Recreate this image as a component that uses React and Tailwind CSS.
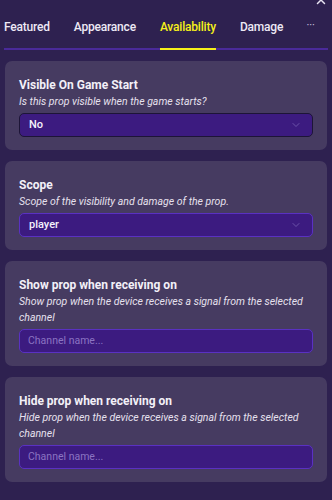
import { ChevronDown, X } from "lucide-react";

const tabs = ["Featured", "Appearance", "Availability", "Damage"];

function Section({ title, hint, children }) {
  return (
    <div className="rounded-[7px] bg-[#463b61] px-[14px] pt-[15px] pb-[13px]">
      <p className="text-[12px] font-bold leading-[18px] text-[#f3f0f8]">{title}</p>
      <p className="text-[10.5px] italic leading-[16px] text-[#e6e1ee]">{hint}</p>
      <div className="mt-[3px]">{children}</div>
    </div>
  );
}

function Select({ value, dark }) {
  return (
    <div
      className={`flex h-[24px] items-center justify-between rounded-[5px] border bg-[#3c1b80] pl-[9px] pr-[10px] ${
        dark ? "border-[#1d1537]" : "border-[#5a31c2]"
      }`}
    >
      <span className="text-[11px] font-medium text-[#f5f2fb]">{value}</span>
      <ChevronDown size={12} strokeWidth={1.5} className="text-[#7b64b6]" />
    </div>
  );
}

function ChannelInput() {
  return (
    <div className="flex h-[24px] items-center rounded-[5px] border border-[#5a31c2] bg-[#3c1b80] pl-[8px]">
      <span className="text-[10.5px] text-[#8b74c2]">Channel name...</span>
    </div>
  );
}

export default function App() {
  return (
    <div
      className="relative h-[500px] w-[332px] overflow-hidden bg-[#2e2150]"
      style={{ fontFamily: "Roboto, 'Noto Sans', sans-serif" }}
    >
      <X size={14} strokeWidth={2.5} className="absolute right-[4px] top-[-7px] text-[#e9e4f2]" />

      <div className="px-[4px] pt-[18px]">
        <div className="flex items-end border-b-2 border-[#4a2a9a]">
          {tabs.map((t, i) => (
            <div
              key={t}
              className={`relative pb-[12px] text-[12px] font-medium leading-[18px] tracking-[-0.2px] ${
                i === 0 ? "" : "ml-[24px]"
              } ${t === "Availability" ? "text-[#f6f01a]" : "text-[#ede9f5]"}`}
            >
              {t}
              {t === "Availability" && (
                <span className="absolute bottom-[-2px] left-0 right-0 h-[2px] bg-[#f6f01a]" />
              )}
            </div>
          ))}
          <div className="ml-auto mr-[13px] pb-[14px] text-[11px] leading-[16px] text-[#d8d2e6]">···</div>
        </div>
      </div>

      <div className="flex flex-col gap-[11px] px-[5px] pt-[11px]">
        <Section title="Visible On Game Start" hint="Is this prop visible when the game starts?">
          <Select value="No" dark />
        </Section>
        <Section title="Scope" hint="Scope of the visibility and damage of the prop.">
          <Select value="player" />
        </Section>
        <Section
          title="Show prop when receiving on"
          hint="Show prop when the device receives a signal from the selected channel"
        >
          <ChannelInput />
        </Section>
        <Section
          title="Hide prop when receiving on"
          hint="Hide prop when the device receives a signal from the selected channel"
        >
          <ChannelInput />
        </Section>
      </div>
    </div>
  );
}
